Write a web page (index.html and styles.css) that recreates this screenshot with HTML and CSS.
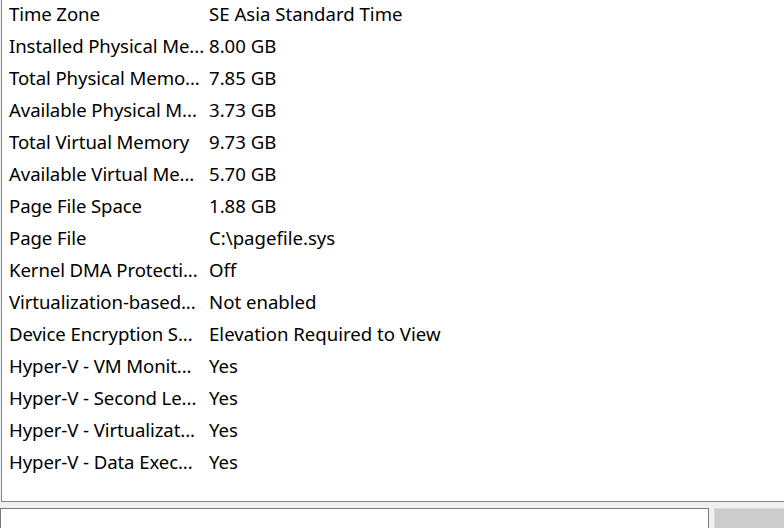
FILE: index.html
```html
<!DOCTYPE html>
<html>
<head>
<meta charset="utf-8">
<link rel="stylesheet" href="styles.css">
</head>
<body>
<div class="window">
  <div class="list">
    <div class="rows">
      <div class="row"><span class="item">Time Zone</span><span class="value">SE Asia Standard Time</span></div>
      <div class="row"><span class="item">Installed Physical Me...</span><span class="value">8.00 GB</span></div>
      <div class="row"><span class="item">Total Physical Memo...</span><span class="value">7.85 GB</span></div>
      <div class="row"><span class="item">Available Physical M...</span><span class="value">3.73 GB</span></div>
      <div class="row"><span class="item">Total Virtual Memory</span><span class="value">9.73 GB</span></div>
      <div class="row"><span class="item">Available Virtual Me...</span><span class="value">5.70 GB</span></div>
      <div class="row"><span class="item">Page File Space</span><span class="value">1.88 GB</span></div>
      <div class="row"><span class="item">Page File</span><span class="value">C:\pagefile.sys</span></div>
      <div class="row"><span class="item">Kernel DMA Protecti...</span><span class="value">Off</span></div>
      <div class="row"><span class="item">Virtualization-based...</span><span class="value">Not enabled</span></div>
      <div class="row"><span class="item">Device Encryption S...</span><span class="value">Elevation Required to View</span></div>
      <div class="row"><span class="item">Hyper-V - VM Monit...</span><span class="value">Yes</span></div>
      <div class="row"><span class="item">Hyper-V - Second Le...</span><span class="value">Yes</span></div>
      <div class="row"><span class="item">Hyper-V - Virtualizat...</span><span class="value">Yes</span></div>
      <div class="row"><span class="item">Hyper-V - Data Exec...</span><span class="value">Yes</span></div>
    </div>
  </div>
  <div class="search">
    <div class="textbox"></div>
    <div class="button"></div>
  </div>
</div>
</body>
</html>
```

FILE: styles.css
```css
html, body {
  margin: 0;
  padding: 0;
  background: #f0f0f0;
  width: 784px;
  height: 528px;
  overflow: hidden;
}

.window {
  display: flex;
  flex-direction: column;
  width: 784px;
  height: 528px;
}

.list {
  margin-left: 1px;
  height: 501px;
  background: #ffffff;
  border-left: 1px solid #828790;
  border-bottom: 1px solid #828790;
  overflow: hidden;
  font-family: "Noto Sans", "Open Sans", sans-serif;
  font-size: 18.6px;
  color: #000000;
}

.rows {
  margin-top: -2px;
  display: flex;
  flex-direction: column;
}

.row {
  display: flex;
  height: 32px;
  line-height: 32px;
  white-space: nowrap;
}

.item {
  flex: 0 0 200px;
  min-width: 0;
  padding-left: 7px;
  box-sizing: border-box;
  letter-spacing: -0.1px;
}

.value {
  padding-left: 7px;
}

.search {
  display: flex;
  margin-top: 6px;
  gap: 5px;
  flex: 1;
}

.textbox {
  width: 709px;
  background: #ffffff;
  border: 1px solid #7a7a7a;
  border-bottom: none;
  box-sizing: border-box;
}

.button {
  flex: 1;
  background: #cccccc;
  border-top: 1px solid #d9d9d9;
  border-left: 1px solid #d9d9d9;
}
```
